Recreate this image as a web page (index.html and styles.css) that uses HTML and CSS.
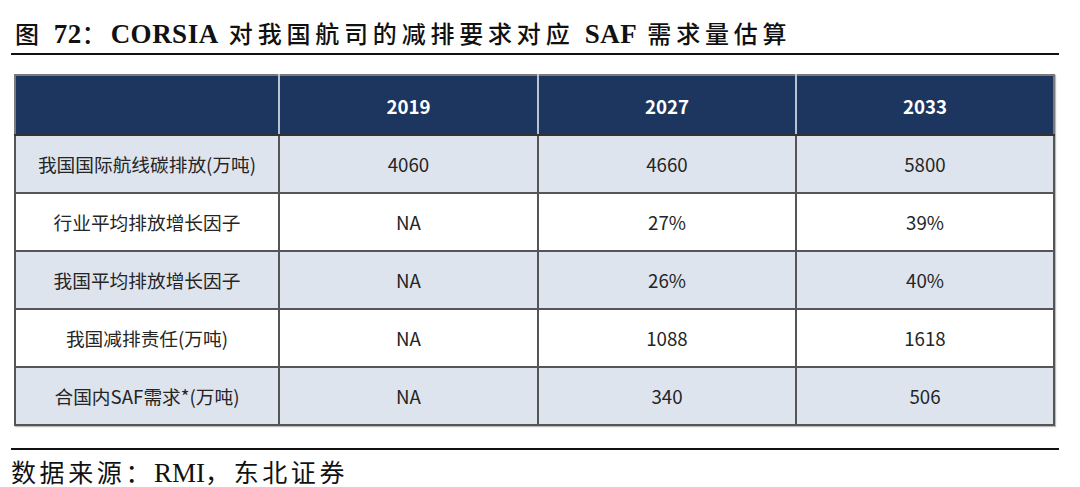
FILE: index.html
```html
<!DOCTYPE html>
<html lang="zh-CN">
<head>
<meta charset="utf-8">
<title>CORSIA SAF</title>
<link rel="stylesheet" href="styles.css">
</head>
<body>
<div class="page">
  <div class="title-bar">
    <h1 class="title">图<span class="lat gap">72</span>：<span class="lat">CORSIA</span> 对我国航司的减排要求对应 <span class="lat">SAF</span> 需求量估算</h1>
  </div>
  <table class="data">
    <colgroup>
      <col class="c1"><col class="c2"><col class="c3"><col class="c4">
    </colgroup>
    <thead>
      <tr><th></th><th>2019</th><th>2027</th><th>2033</th></tr>
    </thead>
    <tbody>
      <tr class="alt"><td>我国国际航线碳排放(万吨)</td><td>4060</td><td>4660</td><td>5800</td></tr>
      <tr><td>行业平均排放增长因子</td><td>NA</td><td>27%</td><td>39%</td></tr>
      <tr class="alt"><td>我国平均排放增长因子</td><td>NA</td><td>26%</td><td>40%</td></tr>
      <tr><td>我国减排责任(万吨)</td><td>NA</td><td>1088</td><td>1618</td></tr>
      <tr class="alt"><td>合国内SAF需求*(万吨)</td><td>NA</td><td>340</td><td>506</td></tr>
    </tbody>
  </table>
  <div class="source">数据来源：<span class="lat-r">RMI</span>，东北证券</div>
</div>
</body>
</html>
```

FILE: styles.css
```css
html, body {
  margin: 0;
  padding: 0;
  background: #ffffff;
}

.page {
  width: 1080px;
  height: 487px;
  padding: 0 0 0 11px;
  box-sizing: border-box;
}

.title-bar {
  width: 1048px;
  height: 53px;
  border-bottom: 2px solid #111;
  display: flex;
  align-items: flex-end;
}

.title {
  margin: 0 0 4px 4px;
  font-family: "Noto Sans CJK SC", "Liberation Serif", serif;
  font-weight: 500;
  font-size: 24px;
  line-height: 30px;
  color: #111;
  letter-spacing: 4.8px;
  white-space: nowrap;
}

.lat {
  font-family: "Liberation Serif", serif;
  font-weight: 700;
  font-size: 27px;
  letter-spacing: 0.5px;
}

.gap {
  margin-left: 10px;
}

.data {
  margin: 19px 0 0 3px;
  width: 1039px;
  border-collapse: collapse;
  table-layout: fixed;
  border: 2px solid #7a7a7a;
  box-shadow: 1px 1px 1px #bbb;
  font-family: "Noto Sans CJK SC", "Noto Sans", sans-serif;
  font-size: 18.7px;
  color: #252525;
}

.c1 { width: 264px; }
.c2 { width: 259px; }
.c3 { width: 258px; }
.c4 { width: 258px; }

.data th {
  height: 58px;
  padding: 0;
  background: #1c365f;
  color: #ffffff;
  font-weight: 700;
  font-size: 18.7px;
  text-align: center;
  border-left: 2px solid #b9c2d0;
  border-bottom: 2px solid #333;
}

.data th:first-child {
  border-left: none;
}

.data td {
  height: 56px;
  padding: 0;
  text-align: center;
  border: 2px solid #555;
  line-height: 24px;
}

.data tr.alt td {
  background: #dee4ee;
}

.source {
  margin-top: 22px;
  width: 1048px;
  border-top: 2px solid #111;
  padding-top: 5px;
  font-family: "Noto Sans CJK SC", "Liberation Serif", serif;
  font-weight: 400;
  font-size: 25px;
  line-height: 32px;
  letter-spacing: 3.6px;
  color: #111;
}

.source .lat-r {
  font-family: "Liberation Serif", serif;
  font-size: 27px;
  letter-spacing: 0;
}
```
